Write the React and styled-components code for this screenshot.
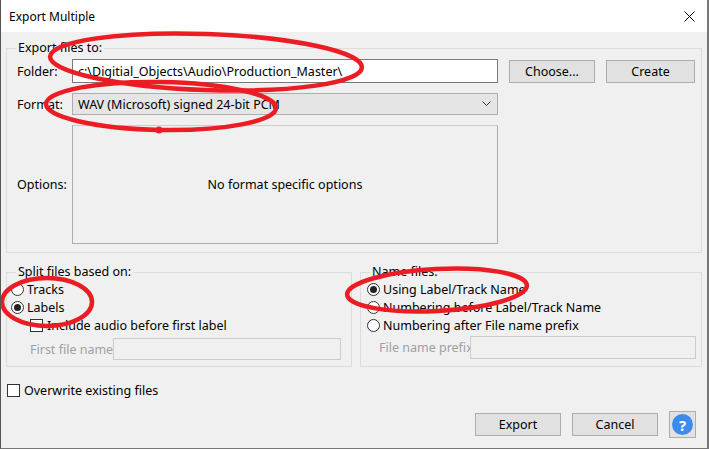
import React from "react";
import styled, { createGlobalStyle } from "styled-components";

const G = createGlobalStyle`
  html,body{margin:0;padding:0;}
  body{font-family:"Noto Sans","Open Sans",sans-serif;font-size:12.5px;color:#000;background:#f0f0f0;}
`;
const Win = styled.div`position:relative;width:709px;height:449px;background:#f0f0f0;overflow:hidden;box-sizing:border-box;border-left:1px solid #555;border-right:2px solid #777;border-bottom:1px solid #777;white-space:nowrap;`;
const Title = styled.div`height:32px;background:#fff;display:flex;align-items:center;justify-content:space-between;padding:0 12px 0 8px;font-size:12px;`;
const Body = styled.div`padding:9px 5px 0 5px;display:flex;flex-direction:column;`;
const Group = styled.fieldset`margin:0;border:1px solid #dcdcdc;padding:${p=>p.pad||"2px 9px 6px 9px"};min-width:0;flex:${p=>p.flex||"none"};height:${p=>p.h}px;box-sizing:border-box;
  legend{padding:0 2px;margin-left:-1px;font-size:12.5px;line-height:14px;}`;
const Row = styled.div`display:flex;align-items:center;gap:${p=>p.gap||0}px;margin-top:${p=>p.mt||0}px;`;
const Label = styled.span`width:${p=>p.w}px;flex:none;color:${p=>p.dis?"#a0a0a0":"#000"};`;
const Input = styled.div`width:${p=>p.w}px;height:${p=>p.h||24}px;box-sizing:border-box;border:1px solid ${p=>p.dis?"#cccccc":"#7a7a7a"};background:${p=>p.dis?"#f0f0f0":"#fff"};display:flex;align-items:center;padding-left:5px;flex:none;`;
const Combo = styled(Input)`background:#e5e5e5;border-color:#adadad;justify-content:space-between;padding-right:6px;height:22px;`;
const Btn = styled.div`width:${p=>p.w||86}px;height:23px;box-sizing:border-box;border:1px solid #adadad;background:#e1e1e1;display:flex;align-items:center;justify-content:center;`;
const OptBox = styled.div`width:426px;height:119px;box-sizing:border-box;border:1px solid #adadad;border-top-color:#ccc;background:#f0f0f0;display:flex;align-items:center;justify-content:center;`;
const Radio = styled.span`width:11px;height:11px;border:1px solid #333;border-radius:50%;background:#fff;display:inline-flex;align-items:center;justify-content:center;margin-right:3px;flex:none;
  &::after{content:"";width:7px;height:7px;border-radius:50%;background:${p=>p.on?"#222":"transparent"};}`;
const Check = styled.span`width:11px;height:11px;border:1px solid #333;background:#fff;margin-right:4px;flex:none;`;
const Opt = styled.div`display:flex;align-items:center;height:18px;margin-left:${p=>p.ml||0}px;`;
const Help = styled.div`width:27px;height:27px;box-sizing:border-box;border:1px solid #adadad;background:#e1e1e1;display:flex;align-items:center;justify-content:center;
  span{width:21px;height:21px;border-radius:50%;background:#3c8cf0;color:#fff;font-weight:bold;font-size:15px;display:flex;align-items:center;justify-content:center;}`;
const Overlay = styled.svg`position:absolute;left:0;top:0;pointer-events:none;`;

export default function App(){
  return <Win><G/>
    <Title><span>Export Multiple</span>
      <svg width="11" height="11" viewBox="0 0 11 11"><path d="M0.5 0.5L10.5 10.5M10.5 0.5L0.5 10.5" stroke="#000" strokeWidth="1"/></svg>
    </Title>
    <Body>
      <Group h={212} pad="2px 9px 6px 10px"><legend>Export files to:</legend>
        <Row mt={2}><Label w={55}>Folder:</Label><Input w={426}>c:\Digitial_Objects\Audio\Production_Master\</Input>
          <Row gap={11} style={{marginLeft:11}}><Btn>Choose...</Btn><Btn w={89}>Create</Btn></Row></Row>
        <Row mt={10}><Label w={55}>Format:</Label><Combo w={426}><span>WAV (Microsoft) signed 24-bit PCM</span>
          <svg width="9" height="6" viewBox="0 0 9 6"><path d="M0.5 0.5L4.5 4.5L8.5 0.5" stroke="#333" fill="none"/></svg></Combo></Row>
        <Row mt={10}><Label w={55}>Options:</Label><OptBox>No format specific options</OptBox></Row>
      </Group>
      <Row mt={12} gap={8} style={{alignItems:"stretch"}}>
        <Group flex="0 0 346px" h={102} pad="1px 9px 6px 4px"><legend style={{marginLeft:5}}>Split files based on:</legend>
          <Opt><Radio/>Tracks</Opt>
          <Opt><Radio on/>Labels</Opt>
          <Opt ml={19}><Check/>Include audio before first label</Opt>
          <Row mt={4} style={{marginLeft:19}}><Label w={83} dis>First file name:</Label><Input w={228} h={22} dis/></Row>
        </Group>
        <Group flex="1" h={102} pad="1px 6px 6px 6px"><legend style={{marginLeft:3}}>Name files:</legend>
          <Opt><Radio on/>Using Label/Track Name</Opt>
          <Opt><Radio/>Numbering before Label/Track Name</Opt>
          <Opt><Radio/>Numbering after File name prefix</Opt>
          <Row mt={2} style={{marginLeft:12}}><Label w={91} dis>File name prefix:</Label><Input w={226} h={23} dis/></Row>
        </Group>
      </Row>
      <Opt style={{marginTop:14,marginLeft:1}}><Check/>Overwrite existing files</Opt>
      <Row mt={12} gap={11} style={{justifyContent:"flex-end",marginRight:6}}>
        <Btn>Export</Btn><Btn>Cancel</Btn><Help><span>?</span></Help>
      </Row>
    </Body>
    <Overlay width="709" height="449">
      <g fill="none" stroke="#ec1c24" strokeWidth="4.5">
        <ellipse cx="205" cy="62" rx="156" ry="28" transform="rotate(2 205 62)"/>
        <ellipse cx="160" cy="106" rx="115" ry="24" transform="rotate(1 160 106)"/>
        <ellipse cx="46" cy="302" rx="45" ry="24"/>
        <ellipse cx="436" cy="290" rx="90" ry="21" transform="rotate(-3 436 290)"/>
      </g>
      <circle cx="158" cy="130" r="3.5" fill="#ec1c24"/>
    </Overlay>
  </Win>;
}
